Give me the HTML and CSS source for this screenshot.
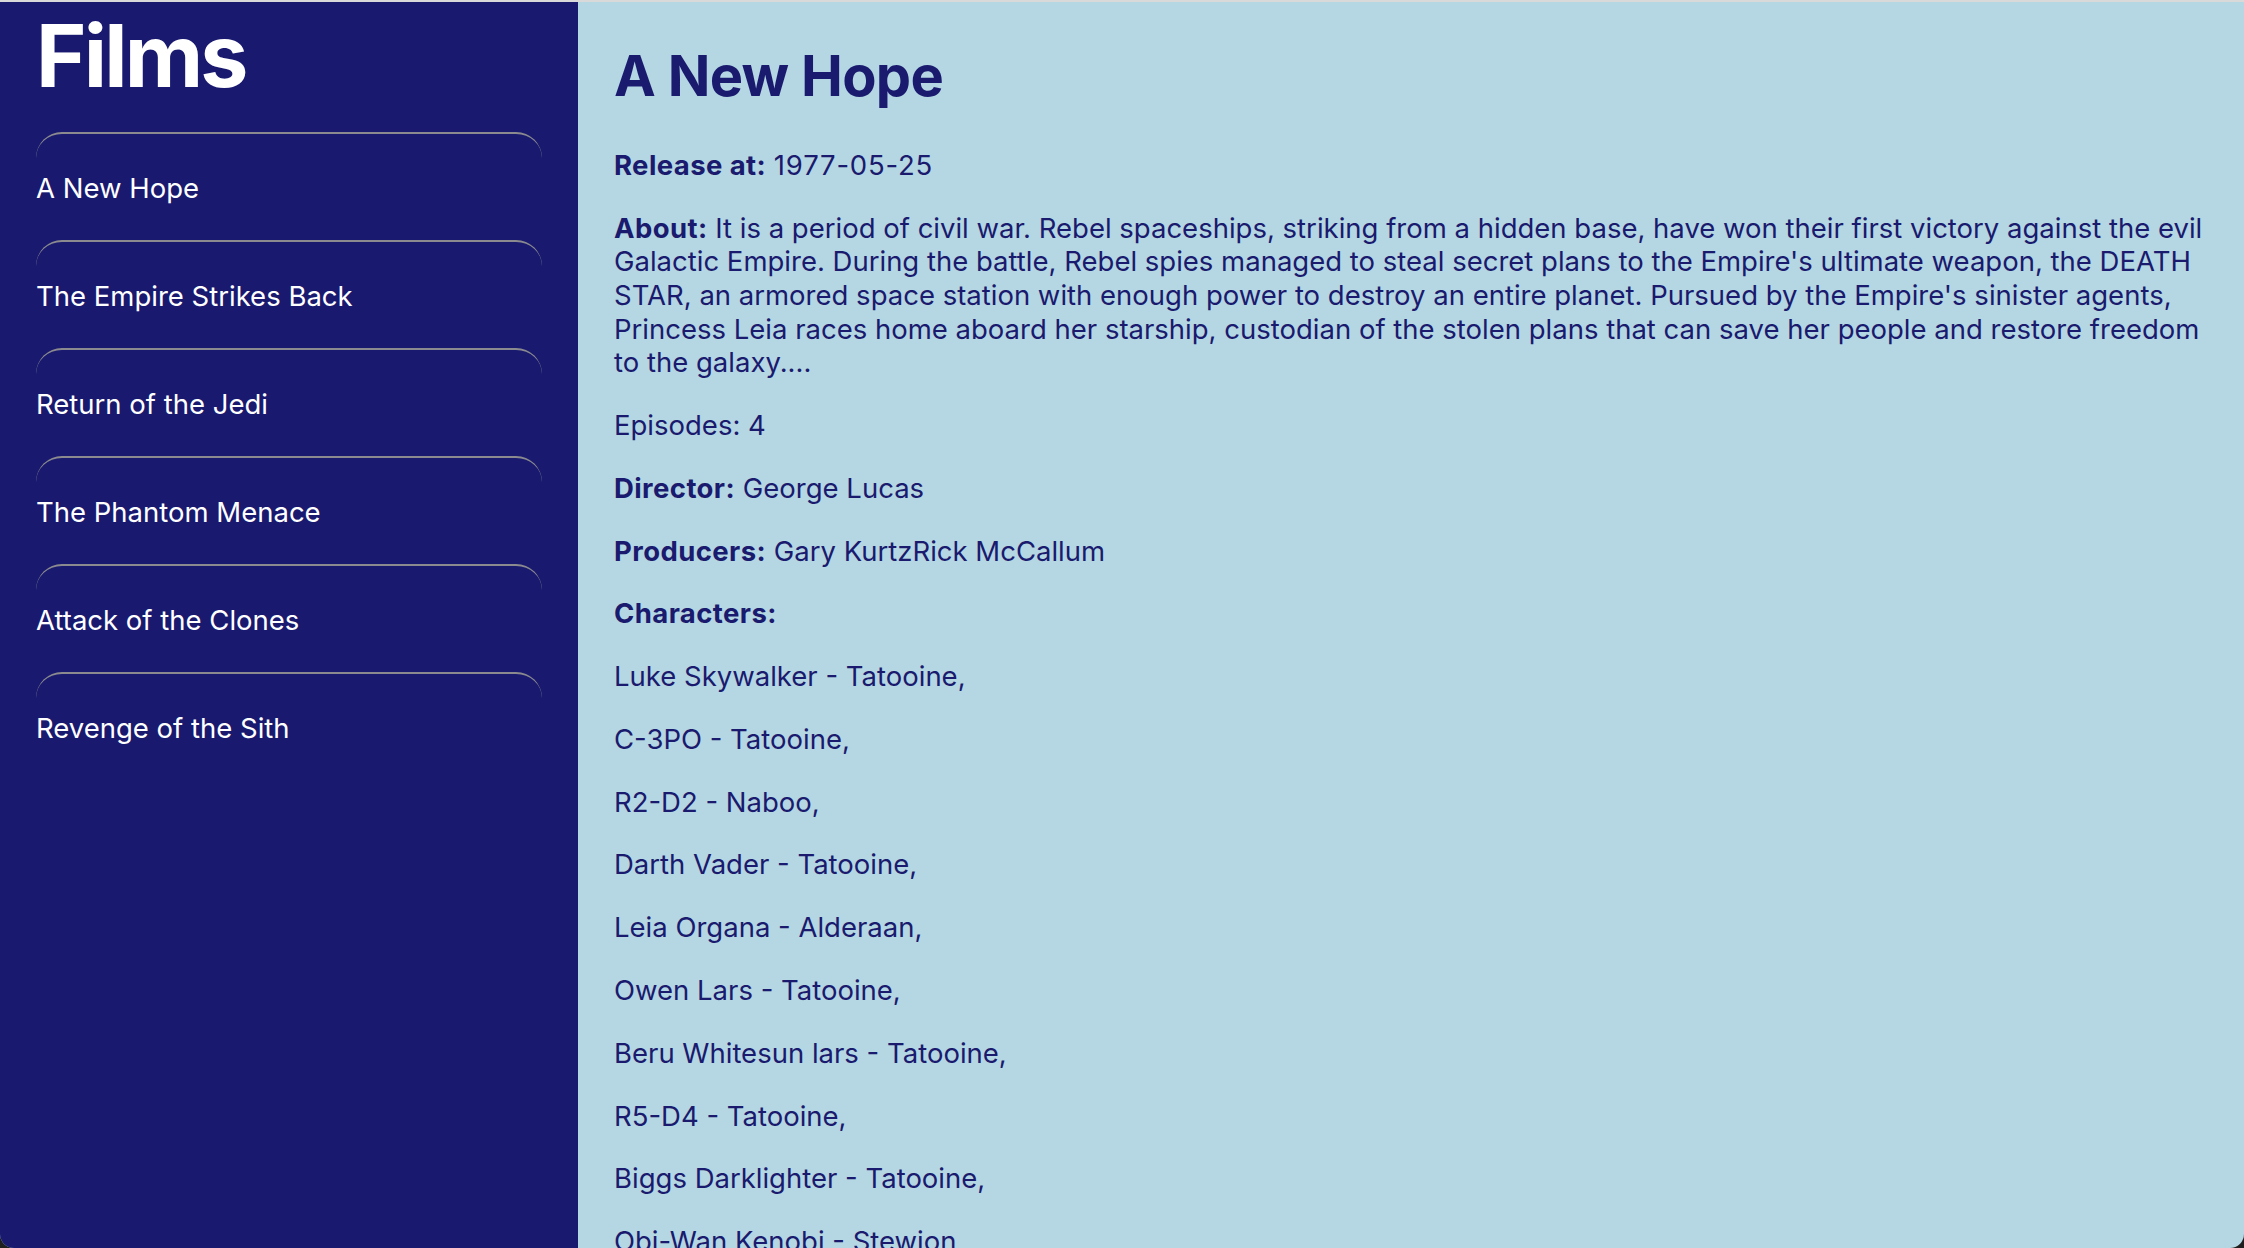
FILE: index.html
```html
<!DOCTYPE html>
<html lang="en">
<head>
<meta charset="utf-8">
<title>Films</title>
<link rel="stylesheet" href="styles.css">
</head>
<body>
<div class="app">
  <aside class="sidebar">
    <h1 class="sidebar-title">Films</h1>
    <ul class="film-list">
      <li class="film-item">A New Hope</li>
      <li class="film-item">The Empire Strikes Back</li>
      <li class="film-item">Return of the Jedi</li>
      <li class="film-item">The Phantom Menace</li>
      <li class="film-item">Attack of the Clones</li>
      <li class="film-item">Revenge of the Sith</li>
    </ul>
  </aside>
  <main class="detail">
    <h2 class="detail-title">A New Hope</h2>
    <p class="detail-row"><strong>Release at:</strong> <span class="num">1977-05-25</span></p>
    <p class="detail-row"><strong>About:</strong> It is a period of civil war. Rebel spaceships, striking from a hidden base, have won their first victory against the evil Galactic Empire. During the battle, Rebel spies managed to steal secret plans to the Empire's ultimate weapon, the DEATH STAR, an armored space station with enough power to destroy an entire planet. Pursued by the Empire's sinister agents, Princess Leia races home aboard her starship, custodian of the stolen plans that can save her people and restore freedom to the galaxy....</p>
    <p class="detail-row">Episodes: 4</p>
    <p class="detail-row"><strong>Director:</strong> George Lucas</p>
    <p class="detail-row"><strong>Producers:</strong> Gary KurtzRick McCallum</p>
    <p class="detail-row"><strong>Characters:</strong></p>
    <p class="detail-row">Luke Skywalker - Tatooine,</p>
    <p class="detail-row">C-3PO - Tatooine,</p>
    <p class="detail-row">R2-D2 - Naboo,</p>
    <p class="detail-row">Darth Vader - Tatooine,</p>
    <p class="detail-row">Leia Organa - Alderaan,</p>
    <p class="detail-row">Owen Lars - Tatooine,</p>
    <p class="detail-row">Beru Whitesun lars - Tatooine,</p>
    <p class="detail-row">R5-D4 - Tatooine,</p>
    <p class="detail-row">Biggs Darklighter - Tatooine,</p>
    <p class="detail-row">Obi-Wan Kenobi - Stewjon,</p>
    <p class="detail-row">Wilhuff Tarkin - Eriadu,</p>
    <p class="detail-row">Chewbacca - Kashyyyk,</p>
  </main>
</div>
</body>
</html>
```
FILE: styles.css
```css
html, body {
  margin: 0;
  padding: 0;
  background: #1f1f1f;
}

body {
  font-family: Inter, "Noto Sans", "Liberation Sans", sans-serif;
  color: #1a1a6e;
}

.app {
  display: flex;
  height: 1248px;
  box-sizing: border-box;
  border-top: 2px solid #d9d9d9;
  border-radius: 0 0 14px 14px;
  overflow: hidden;
  background: #b4d7e3;
}

.sidebar {
  width: 578px;
  flex: none;
  box-sizing: border-box;
  padding: 0 36px 0 36px;
  background: #191970;
  color: #ffffff;
}

.sidebar-title {
  margin: 2px 0 24px;
  font-size: 86px;
  line-height: 104px;
  font-weight: 700;
  letter-spacing: -2.8px;
}

.film-list {
  list-style: none;
  margin: 0;
  padding: 0;
}

.film-item {
  border-top: 2px solid #8a8a8f;
  border-radius: 26px;
  padding: 37px 0 35px;
  font-size: 27.5px;
  line-height: 34px;
}

.detail {
  flex: 1;
  min-width: 0;
  padding: 0 36px;
  color: #1a1a6e;
}

.detail-title {
  margin: 40px 0 39px;
  font-size: 56px;
  line-height: 68px;
  font-weight: 700;
  letter-spacing: -0.7px;
}

.detail-row {
  margin: 0 0 29.2px;
  font-size: 27.5px;
  line-height: 33.6px;
}

.detail-row strong {
  font-weight: 700;
  letter-spacing: 0.4px;
}

.num {
  letter-spacing: 0.8px;
}
```
